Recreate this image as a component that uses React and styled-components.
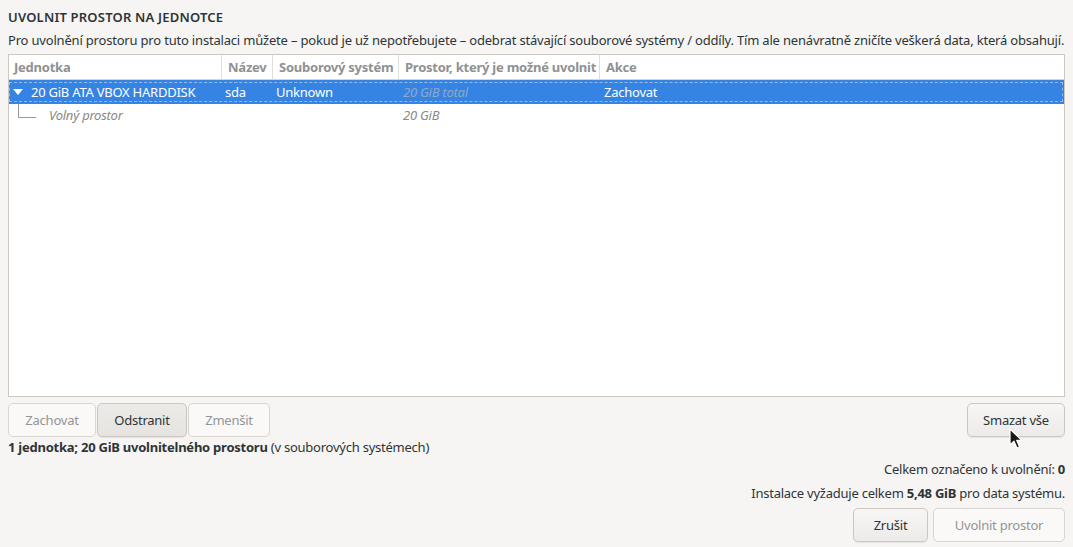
import React from "react";
import styled, { createGlobalStyle } from "styled-components";

const Global = createGlobalStyle`
  html, body { margin: 0; padding: 0; background: #f6f5f4; }
  body {
    font-family: "Noto Sans", "Open Sans", sans-serif;
    font-size: 13px;
    letter-spacing: -0.24px;
    color: #2e3436;
  }
  * { box-sizing: border-box; }
`;

const Page = styled.div`
  position: relative;
  width: 1073px;
  height: 547px;
  padding: 8px 8px 0 8px;
  display: flex;
  flex-direction: column;
  overflow: hidden;
`;

const Title = styled.div`
  height: 18px;
  line-height: 18px;
  font-weight: 600;
  letter-spacing: 0.2px;
  color: #2e3436;
`;

const Description = styled.div`
  margin-top: 5px;
  height: 18px;
  line-height: 18px;
  white-space: nowrap;
  letter-spacing: -0.19px;
`;

const Frame = styled.div`
  margin-top: 5px;
  height: 343px;
  border: 1px solid #cdc7c2;
  background: #ffffff;
  display: flex;
  flex-direction: column;
`;

const cols = "212px 51px 126px 201px 1fr";

const HeaderRow = styled.div`
  display: grid;
  grid-template-columns: ${cols};
  height: 25px;
  border-bottom: 1px solid #d8d4d0;
`;

const HeaderCell = styled.div`
  padding-left: ${(p) => (p.$first ? 5 : 6)}px;
  line-height: 24px;
  font-weight: bold;
  color: #8f9192;
  border-left: ${(p) => (p.$first ? "none" : "1px solid #e0dedb")};
  white-space: nowrap;
  overflow: hidden;
`;

const Row = styled.div`
  position: relative;
  display: grid;
  grid-template-columns: ${cols};
  height: ${(p) => (p.$selected ? 24 : 23)}px;
  background: ${(p) => (p.$selected ? "#3584e4" : "transparent")};
  color: ${(p) => (p.$selected ? "#ffffff" : "#2e3436")};
`;

const Focus = styled.div`
  position: absolute;
  inset: 2px 1px 2px 0px;
  border: 1px dashed rgba(255, 255, 255, 0.45);
  pointer-events: none;
`;

const Cell = styled.div`
  padding-left: ${(p) => p.$pad ?? 5}px;
  line-height: ${(p) => p.$lh ?? 23}px;
  white-space: nowrap;
  overflow: hidden;
  display: flex;
  align-items: center;
  font-style: ${(p) => (p.$italic ? "italic" : "normal")};
  color: ${(p) => p.$color || "inherit"};
`;

const Expander = styled.span`
  width: 0;
  height: 0;
  border-left: 5px solid transparent;
  border-right: 5px solid transparent;
  border-top: 6px solid #ffffff;
  margin-left: 4px;
  margin-right: 8px;
`;

const TreeLine = styled.span`
  flex: none;
  width: 18px;
  height: 23px;
  margin-left: 9px;
  margin-right: 13px;
  position: relative;
  &::before {
    content: "";
    position: absolute;
    left: 0;
    top: 0;
    width: 1px;
    height: 13px;
    background: #9a9a9a;
  }
  &::after {
    content: "";
    position: absolute;
    left: 0;
    top: 13px;
    width: 18px;
    height: 1px;
    background: #9a9a9a;
  }
`;

const ButtonBar = styled.div`
  margin-top: 6px;
  display: flex;
  justify-content: space-between;
  align-items: center;
`;

const Group = styled.div`
  display: flex;
  gap: 1px;
`;

const Button = styled.button`
  height: 34px;
  min-width: ${(p) => p.$w || 0}px;
  padding: 0 14px;
  font-family: inherit;
  font-size: 13px;
  letter-spacing: -0.24px;
  border-radius: 5px;
  border: 1px solid ${(p) => (p.disabled ? "#d8d4d0" : "#cdc7c2")};
  color: ${(p) => (p.disabled ? "#929595" : "#2e3436")};
  background: ${(p) =>
    p.disabled
      ? "#faf9f8"
      : p.$pressed
      ? "linear-gradient(#eceae7, #e6e4e1)"
      : "linear-gradient(#f7f6f5, #edebe9)"};
  box-shadow: ${(p) => (p.disabled ? "none" : "0 1px 1px rgba(0,0,0,0.07)")};
  cursor: default;
`;

const Status = styled.div`
  margin-top: 1px;
  height: 18px;
  line-height: 18px;
`;

const RightLine = styled.div`
  text-align: right;
  height: 18px;
  line-height: 18px;
  margin-top: ${(p) => p.$mt || 0}px;
`;

const Footer = styled.div`
  margin-top: 6px;
  display: flex;
  justify-content: flex-end;
  gap: 5px;
`;

const Cursor = styled.svg`
  position: absolute;
  left: 1009px;
  top: 428px;
`;

export default function App() {
  return (
    <>
      <Global />
      <Page>
        <Title>UVOLNIT PROSTOR NA JEDNOTCE</Title>
        <Description>
          Pro uvolnění prostoru pro tuto instalaci můžete – pokud je už nepotřebujete – odebrat stávající souborové systémy / oddíly. Tím ale nenávratně zničíte veškerá data, která obsahují.
        </Description>
        <Frame>
          <HeaderRow>
            <HeaderCell $first>Jednotka</HeaderCell>
            <HeaderCell>Název</HeaderCell>
            <HeaderCell>Souborový systém</HeaderCell>
            <HeaderCell>Prostor, který je možné uvolnit</HeaderCell>
            <HeaderCell>Akce</HeaderCell>
          </HeaderRow>
          <Row $selected>
            <Cell $pad={0} $lh={24}>
              <Expander />
              20 GiB ATA VBOX HARDDISK
            </Cell>
            <Cell $pad={4} $lh={24}>sda</Cell>
            <Cell $pad={4} $lh={24}>Unknown</Cell>
            <Cell $pad={5} $lh={24} $italic $color="#8fa8c8">
              20 GiB total
            </Cell>
            <Cell $pad={5} $lh={24}>Zachovat</Cell>
            <Focus />
          </Row>
          <Row>
            <Cell $pad={0} $italic $color="#888a85">
              <TreeLine />
              Volný prostor
            </Cell>
            <Cell />
            <Cell />
            <Cell $pad={5} $italic $color="#888a85">
              20 GiB
            </Cell>
            <Cell />
          </Row>
        </Frame>
        <ButtonBar>
          <Group>
            <Button disabled $w={88}>Zachovat</Button>
            <Button $pressed $w={90}>Odstranit</Button>
            <Button disabled $w={82}>Zmenšit</Button>
          </Group>
          <Button $w={98}>Smazat vše</Button>
        </ButtonBar>
        <Status>
          <b>1 jednotka; 20 GiB uvolnitelného prostoru</b> (v souborových systémech)
        </Status>
        <RightLine $mt={4}>
          Celkem označeno k uvolnění: <b>0</b>
        </RightLine>
        <RightLine $mt={6}>
          Instalace vyžaduje celkem <b>5,48 GiB</b> pro data systému.
        </RightLine>
        <Footer>
          <Button $w={75}>Zrušit</Button>
          <Button disabled $w={132}>Uvolnit prostor</Button>
        </Footer>
        <Cursor width="14" height="22" viewBox="0 0 14 22">
          <path
            d="M1 1 L1 17 L5 13.2 L8 20 L10.6 18.9 L7.7 12.3 L12.8 12.3 Z"
            fill="#1a1a1a"
            stroke="#ffffff"
            strokeWidth="1.2"
            strokeLinejoin="round"
          />
        </Cursor>
      </Page>
    </>
  );
}
